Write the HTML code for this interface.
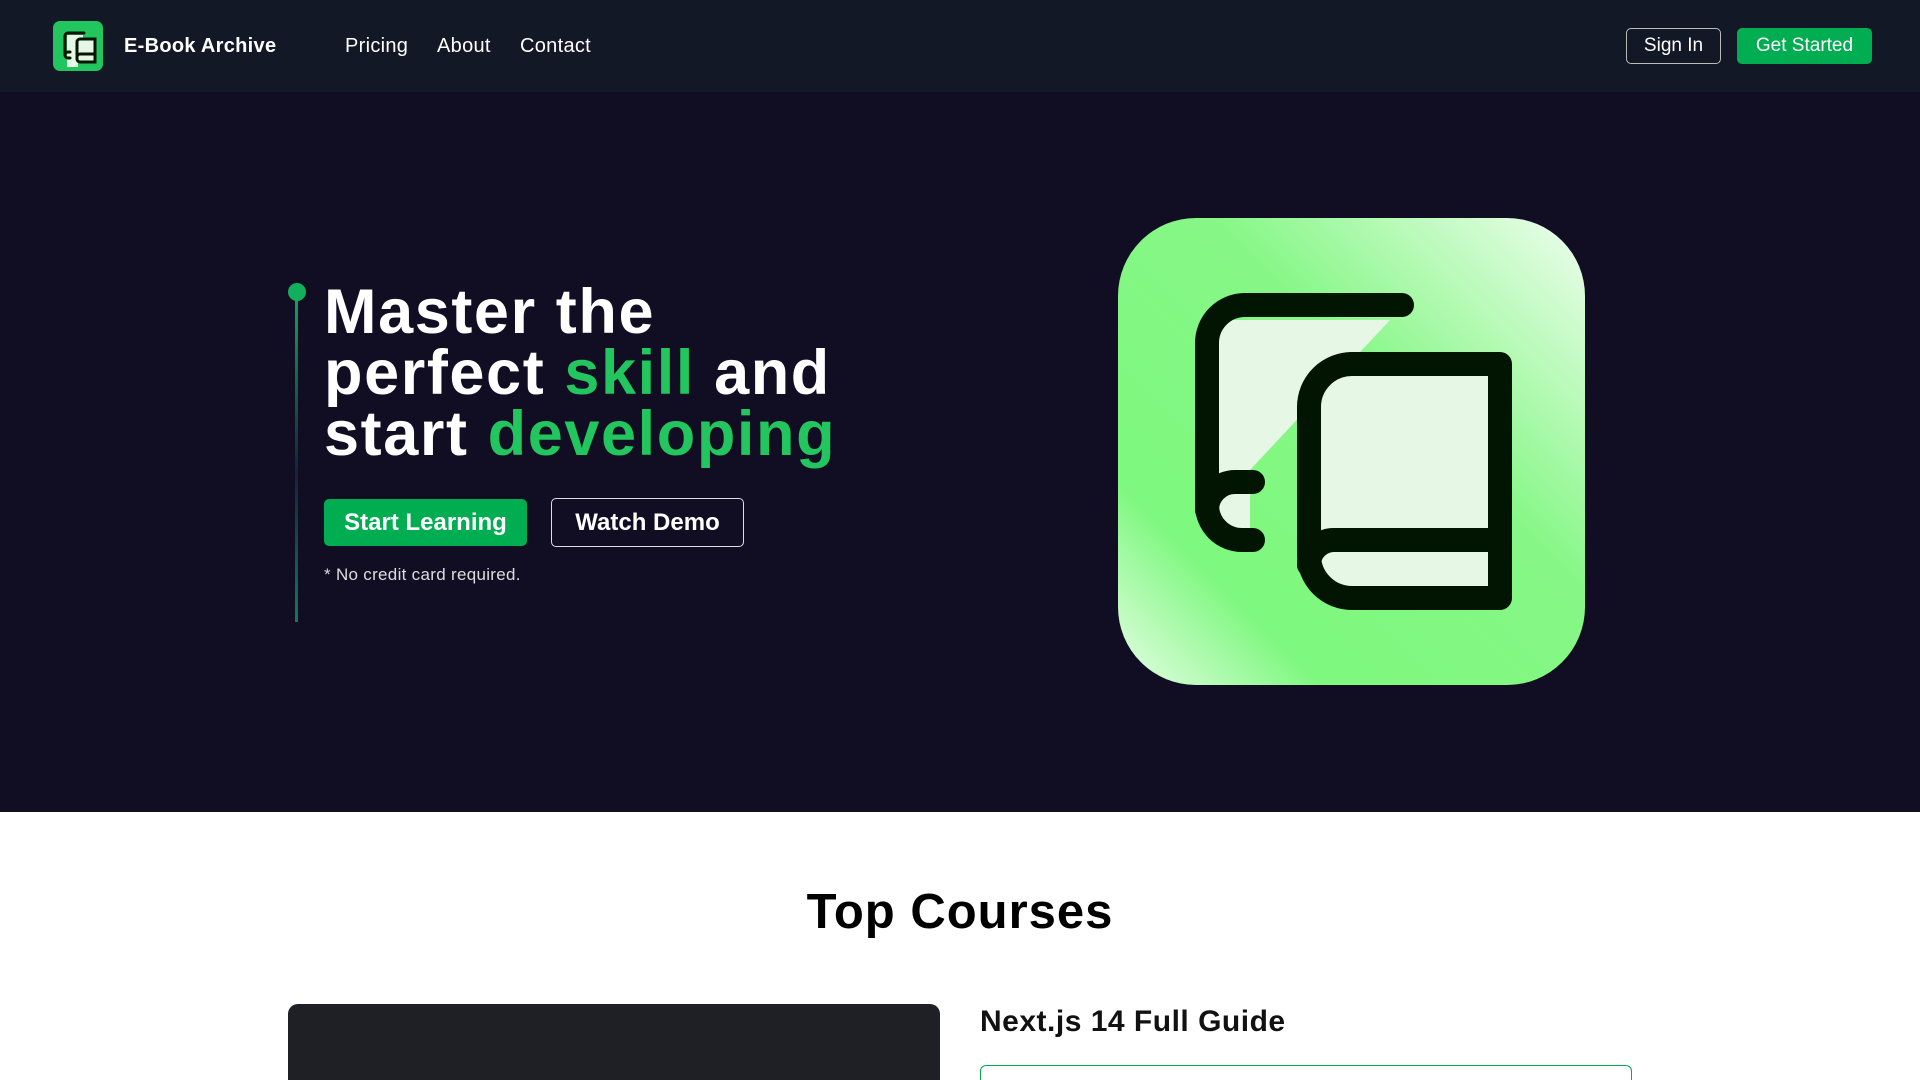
<!DOCTYPE html>
<html><head><style>
*{margin:0;padding:0;box-sizing:border-box}
html,body{width:1920px;height:1080px;overflow:hidden}
body{font-family:"Liberation Sans",sans-serif;background:#fff;position:relative}
nav{position:absolute;left:0;top:0;width:1920px;height:92px;background:#131827}
.logo{position:absolute;left:53px;top:21px;width:50px;height:50px;border-radius:7px;background:#22c55e}
.brand{position:absolute;left:124px;top:35px;color:#fff;font-weight:bold;font-size:20px;letter-spacing:0.3px}
.nl{position:absolute;top:35px;color:#fff;font-size:20px;letter-spacing:0.3px}
.btn{position:absolute;display:flex;align-items:center;justify-content:center;color:#fff;border-radius:5px}
.hero{position:absolute;left:0;top:92px;width:1920px;height:720px;background:#110e24}
h1{position:absolute;left:324px;top:282px;color:#fff;font-size:63px;line-height:61px;font-weight:bold;letter-spacing:1.6px}
.g{color:#22c55e}
.line{position:absolute;left:295px;top:292px;width:3px;height:330px;background:linear-gradient(#0fa860,#18203a 55%,#117a60)}
.dot{position:absolute;left:288px;top:283px;width:18px;height:18px;border-radius:50%;background:#12b05c}
</style></head><body>
<nav>
<div class="logo"><svg width="50" height="50" viewBox="0 0 50 50"><path d="M14 14h16v8h-5v24h-11z" fill="#e6f7e6"/><rect x="23" y="19" width="19" height="22" fill="#e6f7e6"/><g fill="none" stroke="#021502" stroke-width="3" stroke-linecap="round"><path d="M31 12H15a3 3 0 0 0-3 3V34a3 3 0 0 0 3 3h2M17 31h-2a3 3 0 0 0-3 3"/><path d="M27 18h15v23H27a3 3 0 0 1-3-3V21a3 3 0 0 1 3-3zM24 36a3 3 0 0 1 3-3h15"/></g></svg></div>
<div class="brand">E-Book Archive</div>
<div class="nl" style="left:345px">Pricing</div>
<div class="nl" style="left:437px">About</div>
<div class="nl" style="left:520px">Contact</div>
<div class="btn" style="left:1626px;top:28px;width:95px;height:36px;border:1px solid #bbb;font-size:19px">Sign In</div>
<div class="btn" style="left:1737px;top:28px;width:135px;height:36px;background:#00ad50;font-size:19px">Get Started</div>
</nav>
<div class="hero"></div>
<div class="line"></div><div class="dot"></div>
<h1>Master the<br>perfect <span class="g">skill</span> and<br>start <span class="g">developing</span></h1>
<div class="btn" style="left:324px;top:499px;width:203px;height:47px;background:#00ad50;font-size:24px;font-weight:bold">Start Learning</div>
<div class="btn" style="left:551px;top:498px;width:193px;height:49px;border:1px solid #ddd;font-size:24px;font-weight:bold">Watch Demo</div>
<div style="position:absolute;left:324px;top:565px;color:#ddd;font-size:17px;letter-spacing:0.3px">* No credit card required.</div>
<svg style="position:absolute;left:1118px;top:218px" width="467" height="467" viewBox="1118 218 467 467">
<defs><linearGradient id="bg" x1="0" y1="1" x2="1" y2="0">
<stop offset="0" stop-color="#e8fde8"/><stop offset="0.22" stop-color="#7ef87e"/><stop offset="0.6" stop-color="#86f786"/><stop offset="1" stop-color="#effdef"/></linearGradient></defs>
<rect x="1118" y="218" width="467" height="467" rx="78" fill="url(#bg)"/>
<path d="M1207 320 L1390 320 L1250 470 L1250 530 L1207 530Z" fill="#e6f7e6"/>
<rect x="1309" y="364" width="191" height="234" rx="30" fill="#e6f7e6"/>
<g fill="none" stroke="#021502" stroke-width="24" stroke-linecap="round" stroke-linejoin="round">
<path d="M1402 305H1245a38 38 0 0 0-38 38V505a35 35 0 0 0 35 35H1253"/>
<path d="M1253 482H1235a28 28 0 0 0-28 28"/>
<path d="M1350 364H1500V598H1352a43 43 0 0 1-43-43V407a43 43 0 0 1 43-43z"/>
<path d="M1309 565a25 25 0 0 1 25-25H1500"/>
</g></svg>
<div style="position:absolute;left:0;top:884px;width:1920px;text-align:center;font-size:49px;font-weight:bold;color:#000;letter-spacing:1px">Top Courses</div>
<div style="position:absolute;left:288px;top:1004px;width:652px;height:76px;border-radius:10px 10px 0 0;background:#1f2025"></div>
<div style="position:absolute;left:980px;top:1005px;font-size:30px;font-weight:bold;color:#111;letter-spacing:0.5px">Next.js 14 Full Guide</div>
<div style="position:absolute;left:980px;top:1065px;width:652px;height:30px;border:1px solid #00ad50;border-radius:6px"></div>
</body></html>
